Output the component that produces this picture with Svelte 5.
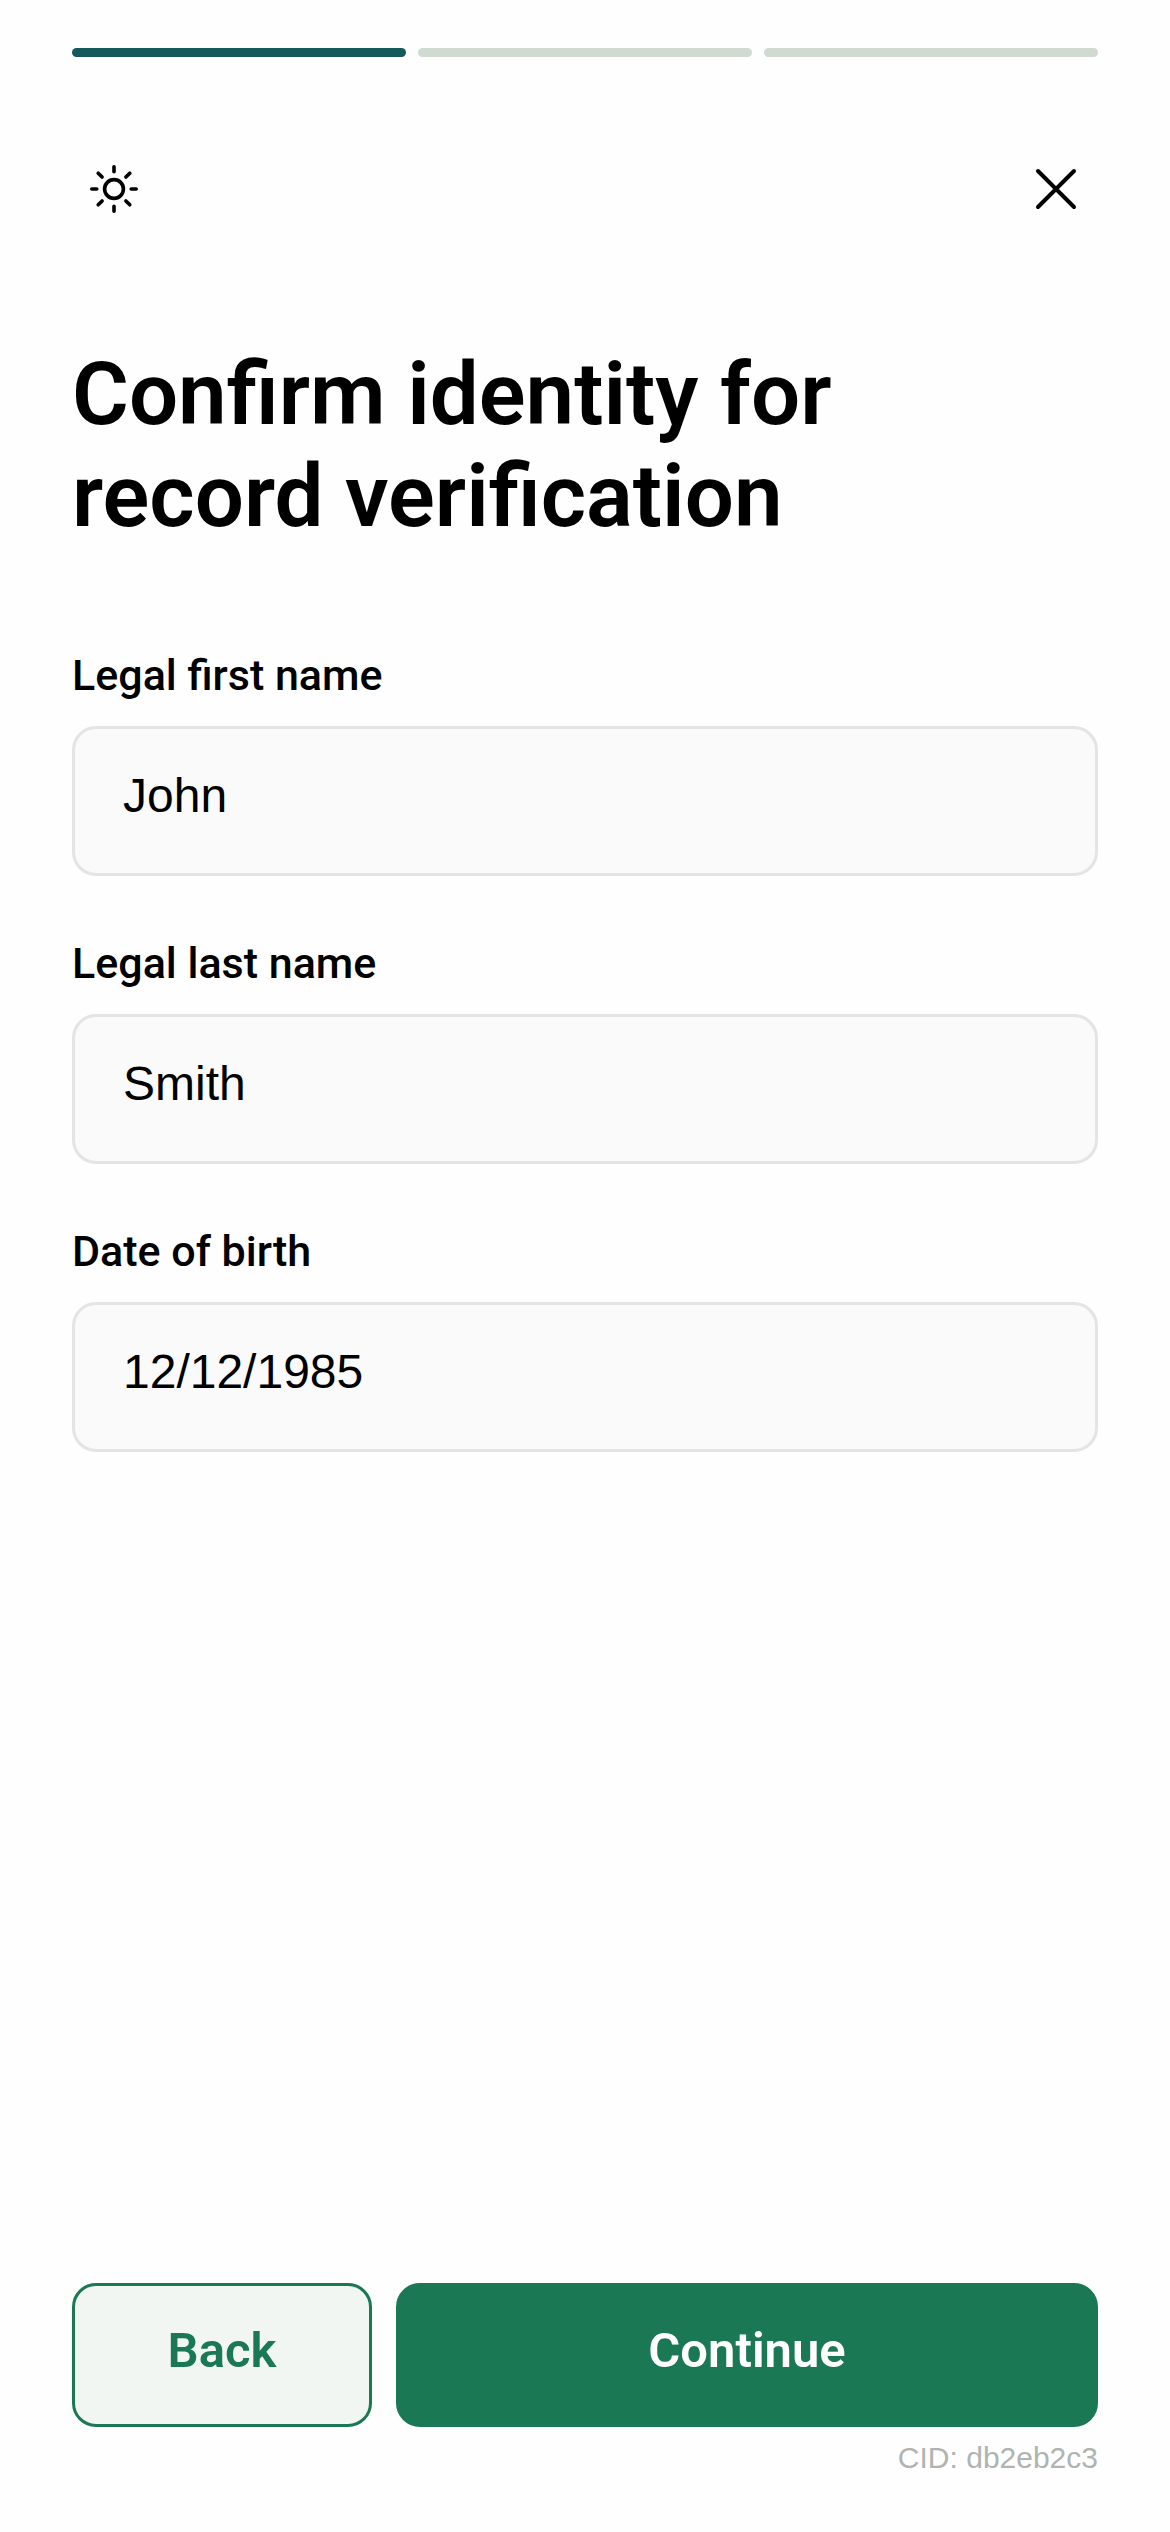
<script lang="ts">
    let step = $state(1);
    let fields = $state([
        { id: 'first-name', label: 'Legal first name', value: 'John', autocomplete: 'given-name' },
        { id: 'last-name', label: 'Legal last name', value: 'Smith', autocomplete: 'family-name' },
        { id: 'birth-date', label: 'Date of birth', value: '12/12/1985', autocomplete: 'bday' }
    ]);

    const steps = [1, 2, 3];

    const handleSubmit = (e: Event) => {
        e.preventDefault();
        step = Math.min(step + 1, steps.length);
    }

    const handleBack = () => {
        step = Math.max(step - 1, 1);
    }
</script>

<main class="page">
    <div class="progress" role="progressbar" aria-label="Progress" aria-valuemin="1" aria-valuemax="3" aria-valuenow={step}>
        {#each steps as s (s)}
            <span class={`bar ${s <= step ? 'done' : ''}`}></span>
        {/each}
    </div>

    <header class="toolbar">
        <button class="icon-btn" aria-label="Theme">
            <svg viewBox="0 0 84 84" fill="none" stroke="currentColor" stroke-width="3.6" stroke-linecap="round">
                <circle cx="42" cy="42" r="9.4" />
                <path d="M42 19.8v5M42 59.2v5M19.8 42h5M59.2 42h5M26.2 26.2l3.9 3.9M53.9 53.9l3.9 3.9M57.8 26.2l-3.9 3.9M30.1 53.9l-3.9 3.9" />
            </svg>
        </button>
        <button class="icon-btn" aria-label="Close">
            <svg viewBox="0 0 84 84" fill="none" stroke="currentColor" stroke-width="4" stroke-linecap="round">
                <path d="M24 24l36 36M60 24L24 60" />
            </svg>
        </button>
    </header>

    <form class="form" onsubmit={handleSubmit}>
        <h1>Confirm identity for record verification</h1>

        {#each fields as field (field.id)}
            <div class="field">
                <label for={field.id}>{field.label}</label>
                <input id={field.id} type="text" autocomplete={field.autocomplete} bind:value={field.value} />
            </div>
        {/each}

        <footer class="footer">
            <div class="actions">
                <button class="btn back" type="button" onclick={handleBack}>Back</button>
                <button class="btn next" type="submit">Continue</button>
            </div>
            <p class="cid">CID: db2eb2c3</p>
        </footer>
    </form>
</main>

<style>
    :global(body) {
        margin: 0;
        background-color: #fefefe;
    }

    .page {
        box-sizing: border-box;
        min-height: 100vh;
        padding: 48px 72px 53px;
        display: flex;
        flex-direction: column;
        color: #000;
        font-family: Roboto, "Liberation Sans", sans-serif;
    }

    .progress {
        display: flex;
        gap: 12px;

        & .bar {
            flex: 1;
            height: 9px;
            border-radius: 5px;
            background-color: #d0dad0;
        }

        & .bar.done {
            background-color: #14595c;
        }
    }

    .toolbar {
        display: flex;
        justify-content: space-between;
        margin-top: 90px;
    }

    .icon-btn {
        width: 84px;
        height: 84px;
        padding: 0;
        border: none;
        background: none;
        color: inherit;
        cursor: pointer;

        & svg {
            display: block;
        }
    }

    .form {
        flex: 1;
        display: flex;
        flex-direction: column;
    }

    h1 {
        max-width: 900px;
        margin: 112px 0 101px;
        font-size: 87px;
        line-height: 102px;
        font-weight: 600;
    }

    .field {
        display: flex;
        flex-direction: column;
        gap: 24px;
        margin-bottom: 60px;

        & label {
            font-size: 43px;
            line-height: 54px;
            font-weight: 500;
        }

        & input {
            box-sizing: border-box;
            width: 100%;
            height: 150px;
            padding: 0 48px 12px;
            border: 3px solid #e4e4e4;
            border-radius: 24px;
            background-color: #fafafa;
            color: inherit;
            font-family: "Liberation Sans", Arial, sans-serif;
            font-size: 48px;
        }
    }

    .footer {
        margin-top: auto;
    }

    .actions {
        display: flex;
        gap: 24px;
    }

    .btn {
        height: 144px;
        padding: 0 0 10px;
        border: 3px solid #1b7855;
        border-radius: 24px;
        font-family: inherit;
        font-size: 49px;
        font-weight: 600;
        cursor: pointer;
    }

    .back {
        width: 300px;
        background-color: #f2f6f2;
        color: #1b7855;
    }

    .next {
        flex: 1;
        background-color: #1b7855;
        color: #fff;
    }

    .cid {
        margin: 10px 0 0;
        color: #b0b4b1;
        font-family: "Liberation Sans", Arial, sans-serif;
        font-size: 30px;
        line-height: 42px;
        text-align: right;
    }
</style>
